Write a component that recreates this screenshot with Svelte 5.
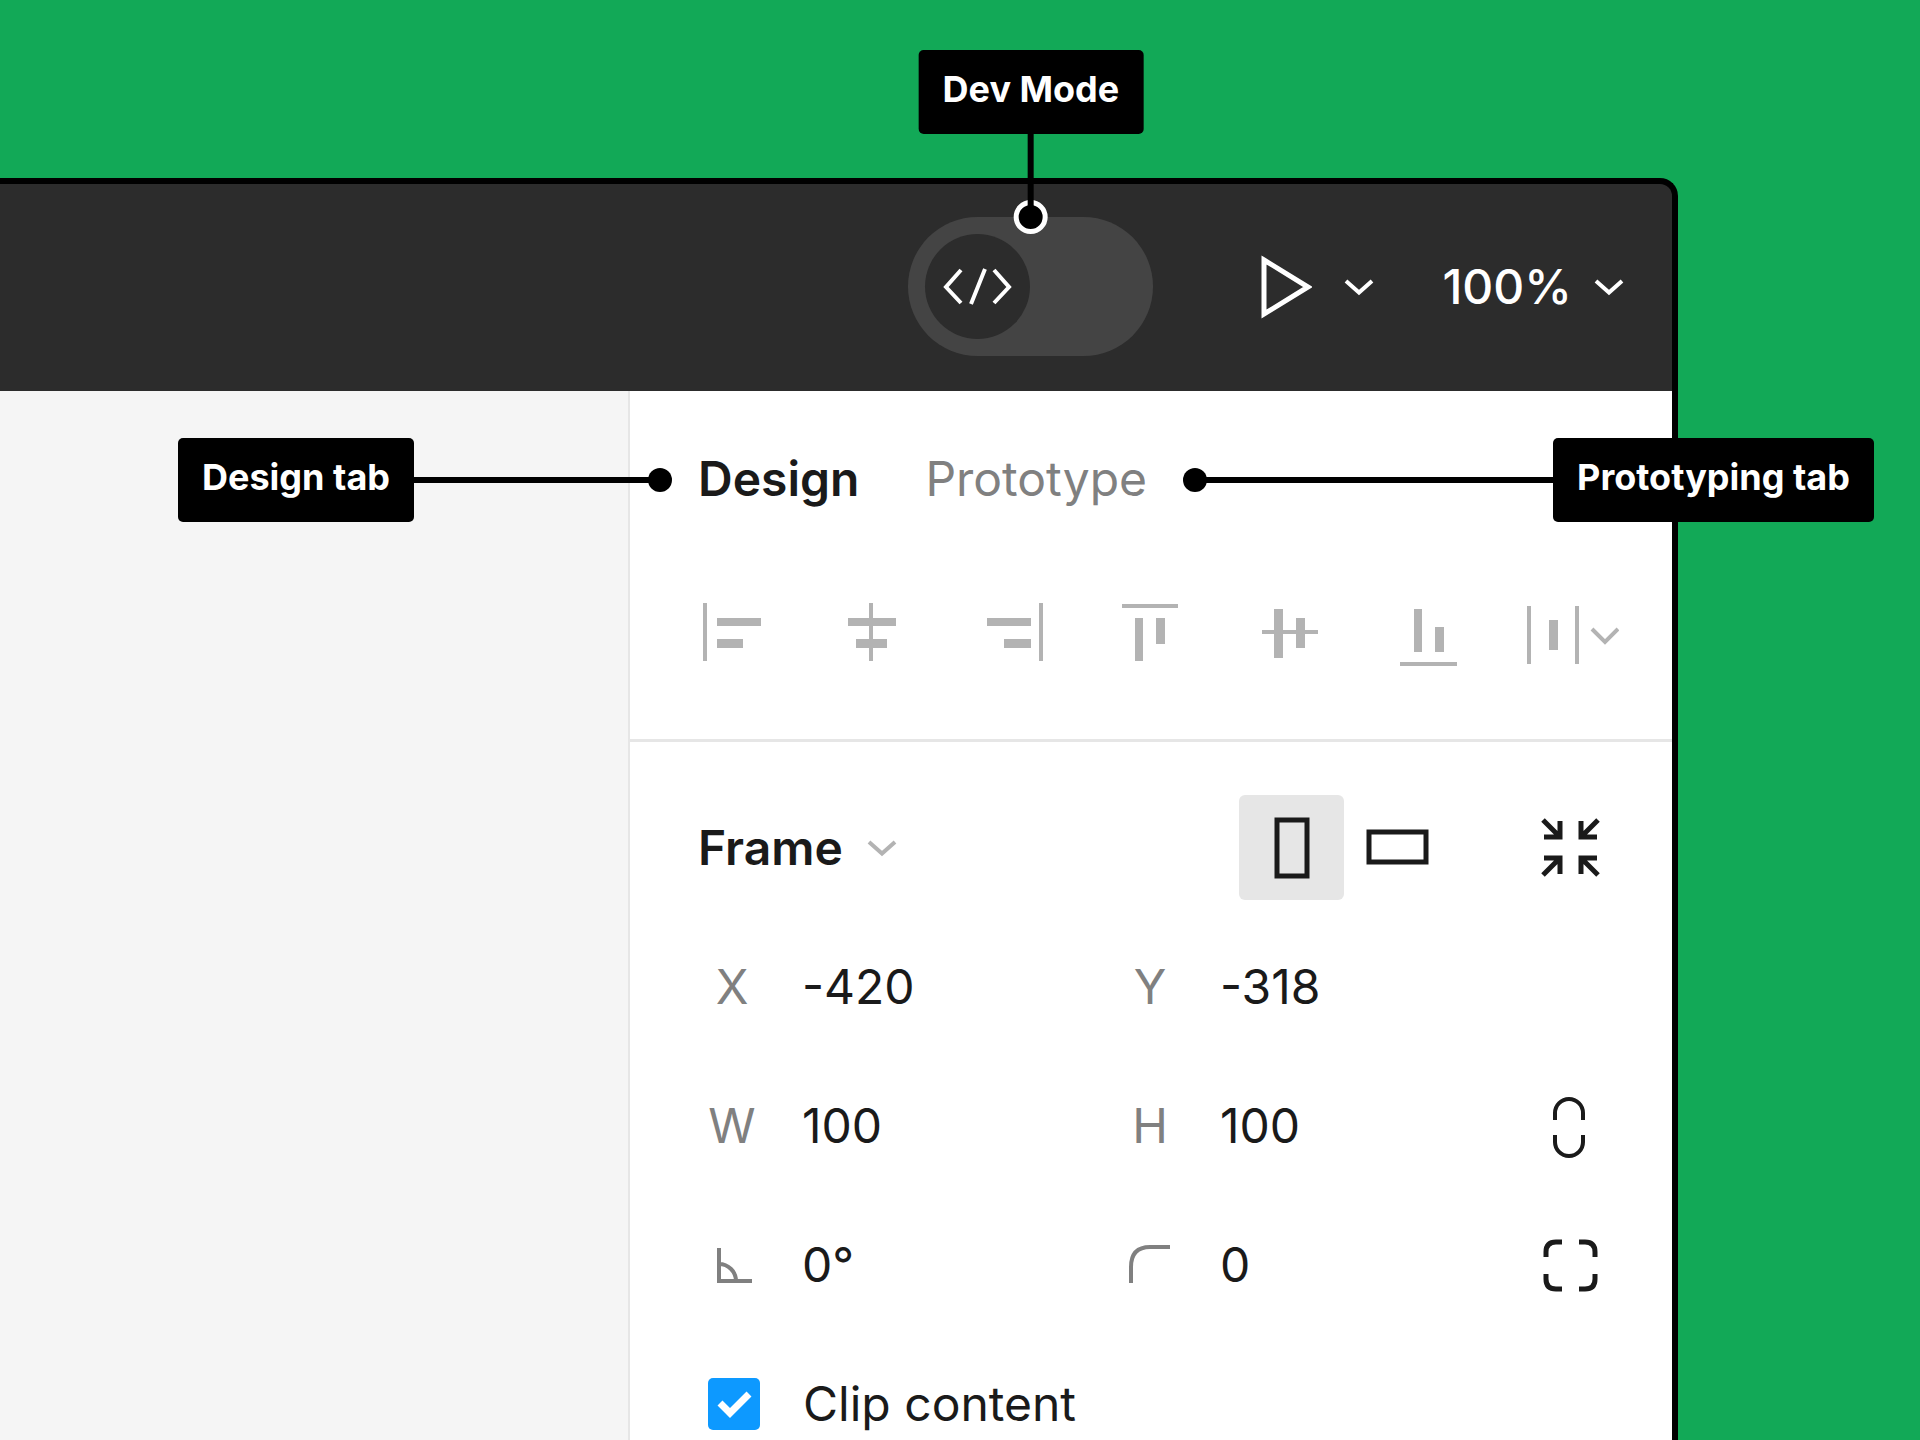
<script>
  let zoom = $state('100%');
  let tab = $state('design');
  let portrait = $state(true);
  let clip = $state(true);
  let frame = $state({ x: '-420', y: '-318', w: '100', h: '100', angle: '0°', radius: '0' });

  // Filled bars as [x, y, width, height] on a 104 x 64 grid.
  const alignments = [
    { name: 'Align left', bars: [[23, 1, 4, 58], [37, 16, 44, 8], [37, 37, 26, 9]] },
    { name: 'Align horizontal centers', bars: [[50, 1, 4, 58], [29, 16, 48, 8], [37, 37, 31, 9]] },
    { name: 'Align right', bars: [[81, 1, 4, 58], [29, 16, 44, 8], [46, 37, 27, 9]] },
    { name: 'Align top', bars: [[25, 2, 56, 4], [38, 16, 8, 43], [59, 16, 9, 26]] },
    { name: 'Align vertical centers', bars: [[25, 28, 56, 4], [37, 7, 9, 49], [59, 16, 9, 30]] },
    { name: 'Align bottom', bars: [[24, 60, 57, 4], [38, 7, 8, 43], [59, 25, 9, 25]] },
    { name: 'Distribute', bars: [[12, 4, 4, 58], [60, 4, 4, 58], [34, 18, 9, 30]], menu: true }
  ];
</script>

{#snippet chevron(tone)}
  <svg class="chevron {tone}" viewBox="0 0 30 18" aria-hidden="true">
    <path d="M2 3 L15 14.5 L28 3" />
  </svg>
{/snippet}

<div class="page">
  <main class="window">
    <header class="toolbar">
      <div class="toggle-wrap">
        <button class="toggle" role="switch" aria-checked="false" aria-label="Dev Mode switch">
          <span class="knob">
            <svg viewBox="0 0 105 105" aria-hidden="true">
              <path d="M36 36 L21 53 L36 69 M60 35 L46 70 M69 36 L84 53 L69 69" />
            </svg>
          </span>
        </button>
        <div class="callout down">
          <span class="tag">Dev Mode</span>
          <span class="line"></span>
          <span class="dot ringed"></span>
        </div>
      </div>
      <button class="tool play" aria-label="Present">
        <svg class="play-icon" viewBox="0 0 52 64" aria-hidden="true">
          <path d="M4 5 L48 32 L4 59 Z" />
        </svg>
        {@render chevron('light')}
      </button>
      <button class="tool zoom">{zoom}{@render chevron('light')}</button>
    </header>

    <div class="body">
      <section class="canvas" aria-label="Canvas"></section>

      <aside class="panel">
        <nav class="tabs">
          <div class="tab-wrap">
            <button class="tab" class:active={tab === 'design'} onclick={() => (tab = 'design')}>Design</button>
            <div class="callout before">
              <span class="tag">Design tab</span>
              <span class="line"></span>
              <span class="dot"></span>
            </div>
          </div>
          <div class="tab-wrap">
            <button class="tab" class:active={tab === 'prototype'} onclick={() => (tab = 'prototype')}>Prototype</button>
            <div class="callout after">
              <span class="dot"></span>
              <span class="line"></span>
              <span class="tag">Prototyping tab</span>
            </div>
          </div>
        </nav>

        <div class="align">
          {#each alignments as item}
            <button aria-label={item.name}>
              <svg viewBox="0 0 104 64" aria-hidden="true">
                {#each item.bars as [x, y, width, height]}
                  <rect {x} {y} {width} {height} />
                {/each}
                {#if item.menu}
                  <path d="M77 27 L90 40 L103 27" />
                {/if}
              </svg>
            </button>
          {/each}
        </div>

        <section class="frame">
          <div class="row heading">
            <button class="preset">Frame{@render chevron('dim')}</button>
            <div class="orientation">
              <button class="square" class:on={portrait} aria-label="Portrait" onclick={() => (portrait = true)}>
                <svg class="bold" viewBox="0 0 72 72" aria-hidden="true"><rect x="21" y="8" width="30" height="56" /></svg>
              </button>
              <button class="square" class:on={!portrait} aria-label="Landscape" onclick={() => (portrait = false)}>
                <svg class="bold" viewBox="0 0 72 72" aria-hidden="true"><rect x="8" y="20" width="57" height="30" /></svg>
              </button>
            </div>
            <button class="square" aria-label="Resize to fit">
              <svg class="bold" viewBox="0 0 72 72" aria-hidden="true">
                <path d="M9 8 L26 25 M10 25 H26 V9 M64 8 L47 25 M63 25 H47 V9 M9 63 L26 46 M10 46 H26 V62 M64 63 L47 46 M63 46 H47 V62" />
              </svg>
            </button>
          </div>

          <div class="row">
            <label class="field"><span>X</span><input bind:value={frame.x} /></label>
            <label class="field"><span>Y</span><input bind:value={frame.y} /></label>
          </div>

          <div class="row">
            <label class="field"><span>W</span><input bind:value={frame.w} /></label>
            <label class="field"><span>H</span><input bind:value={frame.h} /></label>
            <button class="square" aria-label="Constrain proportions">
              <svg viewBox="0 0 72 72" aria-hidden="true">
                <path d="M21 30 V23 A14 14 0 0 1 49 23 V30 M21 45 V52 A14 14 0 0 0 49 52 V45" />
              </svg>
            </button>
          </div>

          <div class="row">
            <label class="field">
              <span>
                <svg viewBox="0 0 48 48" role="img" aria-label="Rotation">
                  <path d="M11 7 V40 H44 M11 23 A17 17 0 0 1 28 40" />
                </svg>
              </span>
              <input bind:value={frame.angle} />
            </label>
            <label class="field">
              <span>
                <svg viewBox="0 0 48 48" role="img" aria-label="Corner radius">
                  <path d="M5 42 V26 Q5 6 24 6 H44" />
                </svg>
              </span>
              <input bind:value={frame.radius} />
            </label>
            <button class="square" aria-label="Independent corners">
              <svg class="bold" viewBox="0 0 72 72" aria-hidden="true">
                <path d="M12 28 V23 Q12 13 22 13 H28 M45 13 H51 Q61 13 61 23 V28 M61 45 V50 Q61 60 51 60 H45 M28 60 H22 Q12 60 12 50 V45" />
              </svg>
            </button>
          </div>

          <div class="row">
            <label class="check">
              <span class="box">
                <input type="checkbox" bind:checked={clip} />
                {#if clip}
                  <svg viewBox="0 0 52 52" aria-hidden="true"><path d="M12 25 L22 35 L41 16" /></svg>
                {/if}
              </span>
              Clip content
            </label>
          </div>
        </section>
      </aside>
    </div>
  </main>
</div>

<style>
  :global(body) {
    margin: 0;
    background: #12a957;
  }

  .page {
    box-sizing: border-box;
    display: flex;
    height: 100vh;
    padding: 178px 242px 0 0;
    overflow: hidden;
    background: #12a957;
    color: #1a1a1a;
    font: 400 48px/58px Inter, sans-serif;
  }

  button,
  input {
    margin: 0;
    padding: 0;
    border: 0;
    background: none;
    color: inherit;
    font: inherit;
  }

  svg {
    display: block;
    flex: none;
    fill: none;
    stroke: currentColor;
    stroke-width: 4;
  }

  .window {
    display: flex;
    flex: 1;
    flex-direction: column;
    min-width: 0;
    border: solid #000;
    border-width: 6px 6px 0 0;
    border-radius: 0 18px 0 0;
    background: #000;
  }

  .toolbar {
    display: flex;
    flex: none;
    align-items: center;
    justify-content: flex-end;
    box-sizing: border-box;
    height: 207px;
    padding: 0 48px 2px 0;
    border-radius: 0 12px 0 0;
    background: #2c2c2c;
    color: #fff;
  }

  .toggle-wrap,
  .tab-wrap {
    position: relative;
  }

  .toggle {
    display: flex;
    align-items: center;
    width: 245px;
    height: 139px;
    padding: 0 17px;
    border-radius: 70px;
    background: #444;
  }

  .knob {
    width: 105px;
    height: 105px;
    border-radius: 50%;
    background: #2c2c2c;
  }

  .tool {
    display: flex;
    align-items: center;
    font-weight: 500;
  }

  .play {
    gap: 32px;
    margin: 0 68px 0 107px;
  }

  .play-icon {
    width: 52px;
    height: 64px;
    stroke-width: 5;
  }

  .zoom {
    gap: 22px;
  }

  .chevron {
    width: 30px;
    height: 18px;
  }

  .dim {
    color: #b3b3b3;
  }

  .body {
    display: flex;
    flex: 1;
  }

  .canvas {
    flex: 1;
    background: #f5f5f5;
  }

  .panel {
    flex: none;
    box-sizing: border-box;
    width: 1044px;
    border-left: 2px solid #e6e6e6;
    background: #fff;
  }

  .tabs {
    display: flex;
    align-items: center;
    gap: 66px;
    box-sizing: border-box;
    height: 174px;
    padding: 2px 0 0 68px;
  }

  .tab {
    display: block;
    color: #808080;
  }

  .tab.active {
    color: #1a1a1a;
    font-weight: 600;
  }

  .callout {
    position: absolute;
    z-index: 1;
    display: flex;
    align-items: center;
  }

  .tag {
    box-sizing: border-box;
    flex: none;
    padding: 18px 24px 24px;
    border-radius: 5px;
    background: #000;
    color: #fff;
    font-size: 36px;
    font-weight: 700;
    line-height: 42px;
    white-space: nowrap;
  }

  .line {
    flex: none;
    background: #000;
  }

  .dot {
    flex: none;
    width: 24px;
    height: 24px;
    border-radius: 50%;
    background: #000;
  }

  .down {
    bottom: calc(100% - 17px);
    left: 50%;
    flex-direction: column;
    transform: translateX(-50%);
  }

  .down .line {
    z-index: 1;
    width: 6px;
    height: 78px;
  }

  .ringed {
    margin-top: -12px;
    border: 5px solid #fff;
  }

  .before,
  .after {
    top: -12px;
  }

  .before {
    right: calc(100% + 26px);
  }

  .after {
    left: calc(100% + 36px);
  }

  .before .line {
    width: 238px;
    height: 6px;
    margin-right: -4px;
  }

  .after .line {
    width: 350px;
    height: 6px;
    margin-left: -4px;
  }

  .align {
    display: grid;
    grid-template-columns: repeat(7, 1fr);
    padding: 0 35px 36px 32px;
    border-bottom: 3px solid #e6e6e6;
    color: #b3b3b3;
  }

  .align button {
    display: grid;
    place-items: center;
    height: 138px;
  }

  .align svg {
    width: 104px;
    height: 64px;
  }

  .align rect {
    fill: currentColor;
    stroke: none;
  }

  .frame {
    padding: 36px 50px 0 66px;
  }

  .row {
    display: flex;
    align-items: center;
    height: 139px;
  }

  .heading {
    padding-left: 2px;
  }

  .preset {
    display: flex;
    align-items: center;
    gap: 24px;
    font-weight: 600;
  }

  .orientation {
    display: flex;
    margin-left: auto;
  }

  .heading > .square {
    margin-left: 68px;
  }

  .square {
    display: grid;
    flex: none;
    place-items: center;
    width: 105px;
    height: 105px;
    border-radius: 6px;
  }

  .square.on {
    background: #e6e6e6;
  }

  .square svg {
    width: 72px;
    height: 72px;
  }

  .square .bold {
    stroke-width: 5;
  }

  .field {
    display: flex;
    align-items: center;
    flex: none;
    width: 418px;
  }

  .field + .field {
    flex: 1;
    min-width: 0;
  }

  .field span {
    display: flex;
    flex: none;
    justify-content: center;
    width: 72px;
    margin-right: 34px;
    color: #808080;
  }

  .field svg {
    width: 48px;
    height: 48px;
  }

  .field input {
    width: 200px;
    min-width: 0;
    outline: 0;
  }

  .check {
    display: flex;
    align-items: center;
    gap: 43px;
    padding-left: 12px;
  }

  .box {
    display: grid;
    width: 52px;
    height: 52px;
  }

  .box > * {
    grid-area: 1 / 1;
    width: 52px;
    height: 52px;
  }

  .box input {
    appearance: none;
    border-radius: 5px;
    background: #0d99ff;
  }

  .box svg {
    color: #fff;
    pointer-events: none;
    stroke-width: 7;
  }
</style>
